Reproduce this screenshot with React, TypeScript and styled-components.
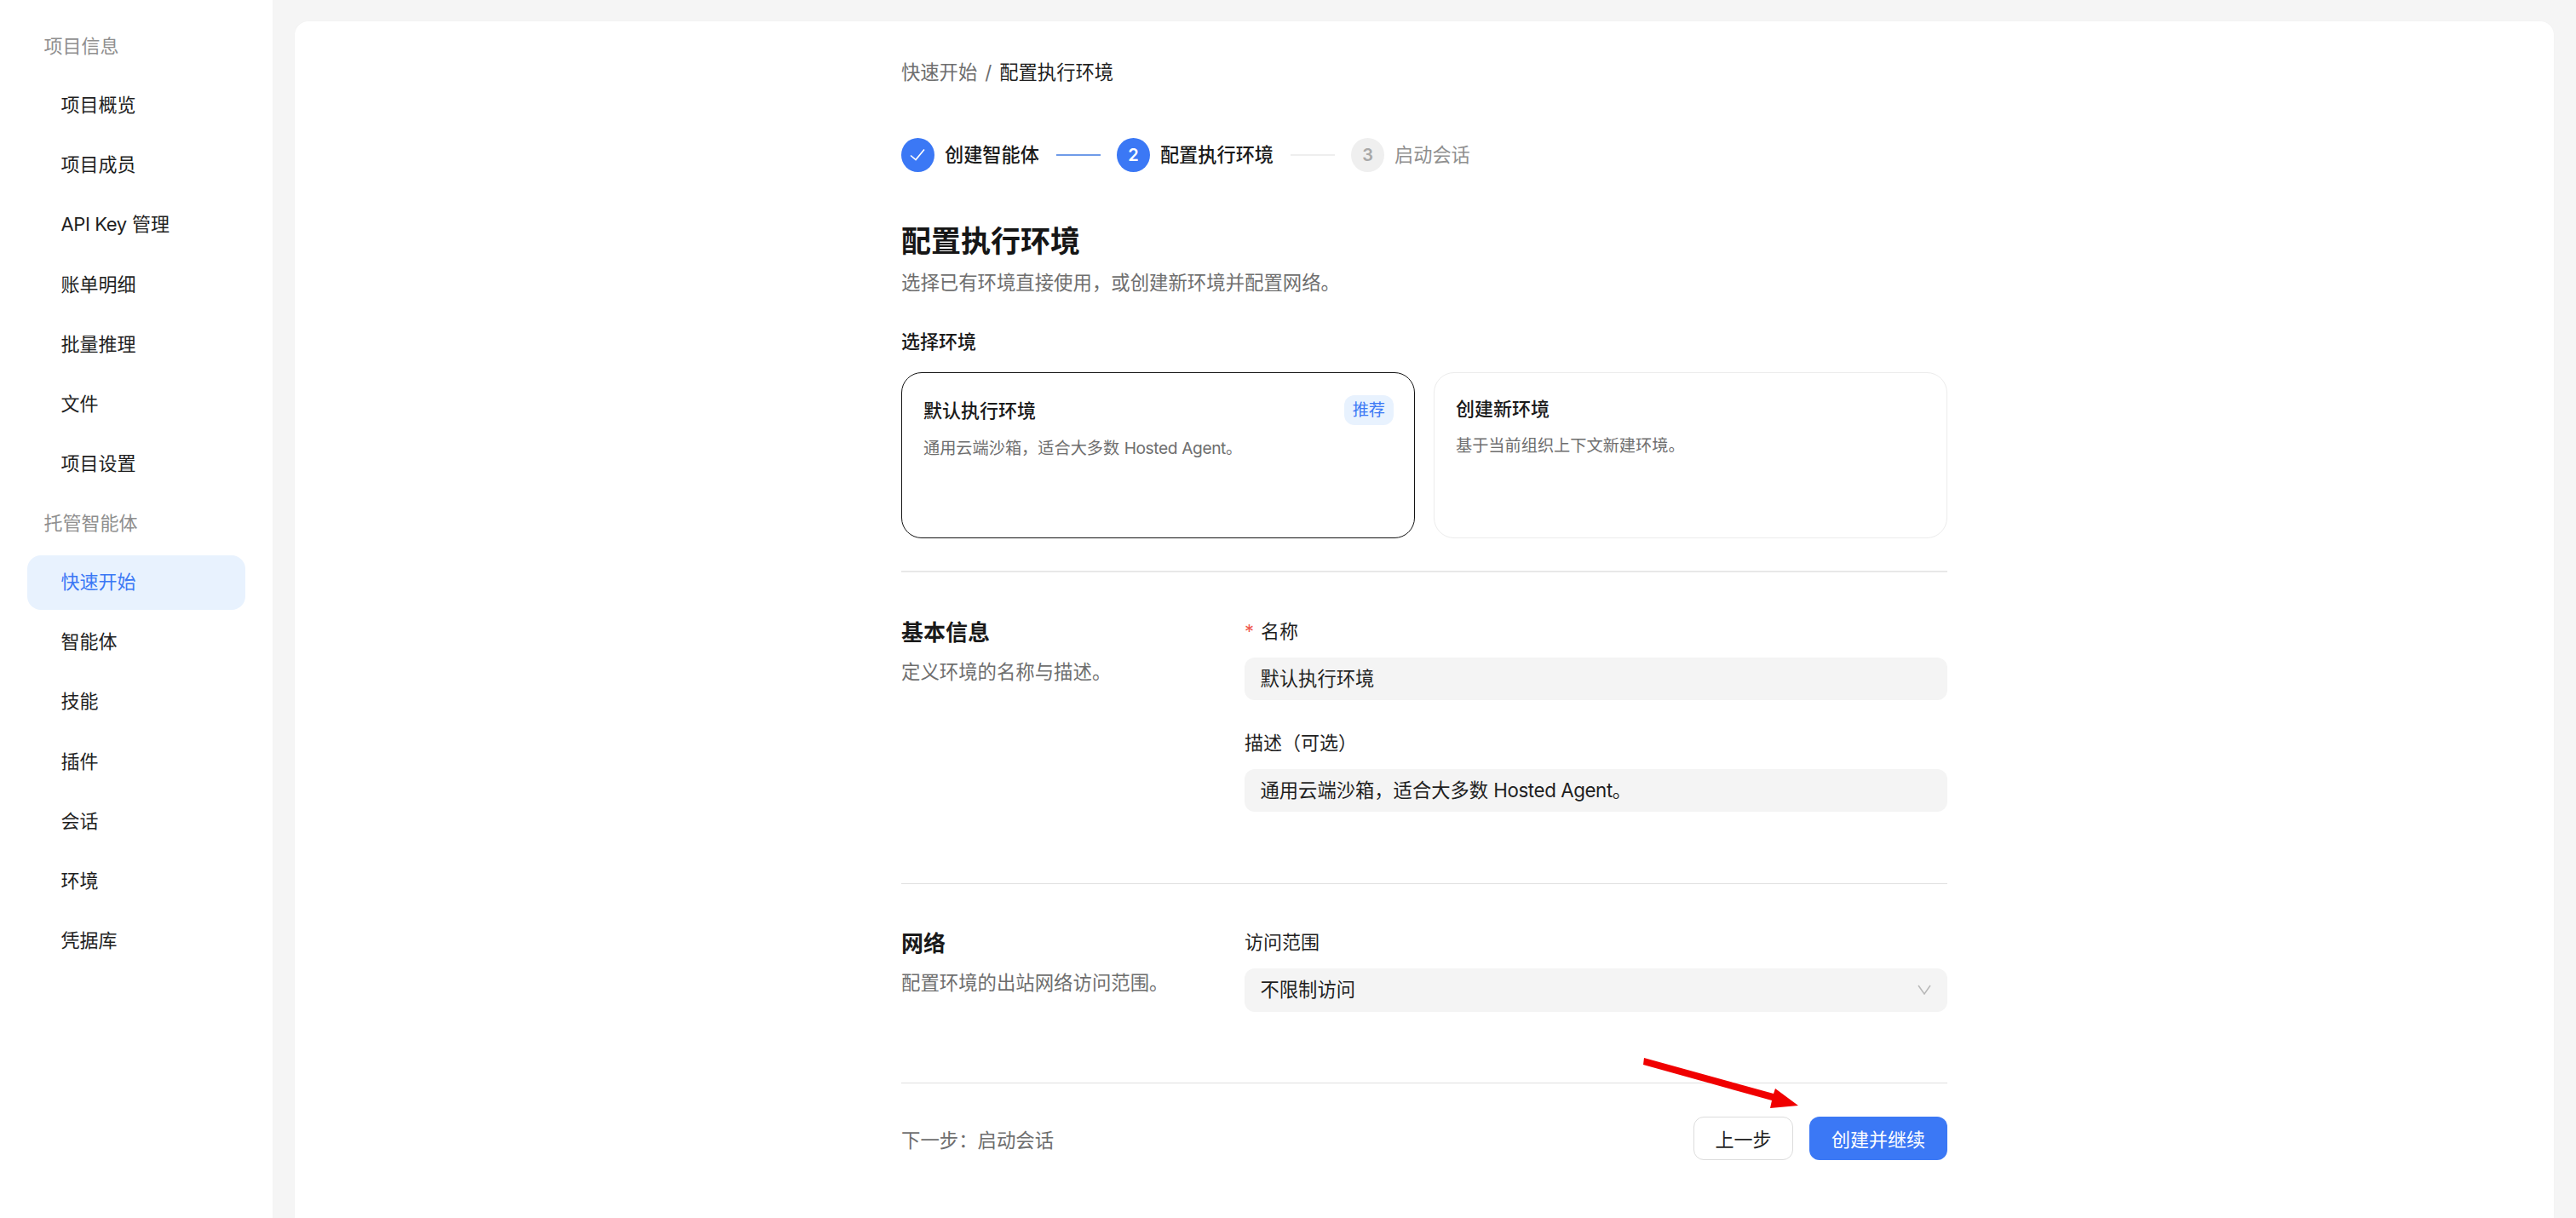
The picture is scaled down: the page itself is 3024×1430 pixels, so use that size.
import React from "react";
import styled, { createGlobalStyle } from "styled-components";

const GlobalStyle = createGlobalStyle`
  html, body {
    margin: 0;
    padding: 0;
    background: #f5f5f5;
    overflow: hidden;
  }
  * {
    box-sizing: border-box;
  }
  body {
    font-family: Inter, "Noto Sans CJK SC", sans-serif;
    color: #1a1a1a;
  }
`;

const Layout = styled.div`
  position: relative;
  display: flex;
  width: 3024px;
  height: 1430px;
  overflow: hidden;
  background: #f5f5f5;
`;

const Sidebar = styled.nav`
  flex: 0 0 320px;
  display: flex;
  flex-direction: column;
  padding: 39px 32px 0;
  background: #fff;
`;

const NavSection = styled.div`
  display: flex;
  flex-direction: column;
  gap: 6.2px;
  margin-bottom: 22px;
`;

const NavLabel = styled.div`
  height: 32px;
  margin-bottom: 14.8px;
  padding-left: 19.5px;
  font-size: 22px;
  line-height: 31px;
  color: #8f8f8f;
`;

const NavItem = styled.div<{ $active?: boolean }>`
  height: 64px;
  padding-left: 39.5px;
  border-radius: 16px;
  font-size: 22px;
  line-height: 62px;
  color: ${p => (p.$active ? "#3b78f5" : "#1f1f1f")};
  background: ${p => (p.$active ? "#e8f2fe" : "transparent")};
`;

const Latin = styled.span`
  letter-spacing: -0.4px;
`;

const Panel = styled.main`
  flex: 1;
  display: flex;
  justify-content: center;
  margin: 25px 26px 0;
  border-radius: 16px 16px 0 0;
  background: #fff;
  box-shadow: 0 0 2px rgba(0, 0, 0, 0.03);
`;

const Content = styled.div`
  display: flex;
  flex-direction: column;
  width: 1228px;
  padding-top: 44px;
`;

const Breadcrumb = styled.div`
  display: flex;
  gap: 9px;
  font-size: 22.3px;
  line-height: 32px;
  color: #6e6e6e;

  b {
    font-weight: 400;
    color: #1f1f1f;
  }
`;

const Stepper = styled.div`
  display: flex;
  align-items: center;
  margin-top: 61px;
`;

const StepDot = styled.span<{ $state: "done" | "current" | "todo" }>`
  display: flex;
  align-items: center;
  justify-content: center;
  flex: 0 0 39px;
  height: 40px;
  border-radius: 50%;
  font-size: 20px;
  font-weight: 600;
  color: ${p => (p.$state === "todo" ? "#a8a8a8" : "#fff")};
  background: ${p => (p.$state === "todo" ? "#efefef" : "#3b78f5")};
`;

const StepLabel = styled.span<{ $muted?: boolean }>`
  margin-left: 12px;
  font-size: 22.2px;
  line-height: 32px;
  font-weight: ${p => (p.$muted ? 400 : 500)};
  color: ${p => (p.$muted ? "#8f8f8f" : "#1a1a1a")};
`;

const StepLine = styled.span<{ $done?: boolean }>`
  flex: 0 0 52px;
  height: 2px;
  margin: 0 19px 0 20px;
  background: ${p => (p.$done ? "#6f9be8" : "#eeeeee")};
`;

const Title = styled.h1`
  margin: 57px 0 0;
  font-size: 35px;
  line-height: 48px;
  font-weight: 700;
  color: #161616;
`;

const Subtitle = styled.p`
  margin: 9px 0 0;
  font-size: 22.4px;
  line-height: 32px;
  color: #6e6e6e;
`;

const ChooseLabel = styled.div`
  margin-top: 37px;
  font-size: 22px;
  line-height: 32px;
  font-weight: 500;
  color: #1a1a1a;
`;

const CardGrid = styled.div`
  display: grid;
  grid-template-columns: 1fr 1fr;
  gap: 22px;
  margin: 20px 0 38px;
`;

const Card = styled.div<{ $selected?: boolean }>`
  height: 195px;
  padding: 26px 24px 0 25px;
  border: 1px solid ${p => (p.$selected ? "#141414" : "#ececec")};
  border-radius: 24px;
  background: #fff;
`;

const CardHead = styled.div`
  display: flex;
  align-items: center;
  justify-content: space-between;
  margin-bottom: 12px;
`;

const CardTitle = styled.div`
  font-size: 22px;
  line-height: 32px;
  font-weight: 500;
  color: #1a1a1a;
`;

const CardText = styled.div`
  font-size: 19.2px;
  line-height: 30px;
  color: #6e6e6e;
`;

const Badge = styled.span`
  height: 35px;
  padding: 0 10px;
  border-radius: 12px;
  font-size: 19.2px;
  line-height: 34px;
  color: #3b78f5;
  background: #e8f2fe;
`;

const Section = styled.section<{ $first?: boolean }>`
  display: grid;
  grid-template-columns: 403px 825px;
  padding: ${p => (p.$first ? "54px 0 84px" : "53px 0 83px")};
  border-top: ${p => (p.$first ? "2px solid #e8e8e8" : "1px solid #e0e0e0")};
`;

const SectionIntro = styled.div`
  display: flex;
  flex-direction: column;
  gap: 12px;
`;

const SectionTitle = styled.h2`
  height: 36px;
  margin: 0;
  font-size: 26px;
  line-height: 34px;
  font-weight: 600;
  color: #1a1a1a;
`;

const SectionText = styled.p`
  height: 32px;
  margin: 0;
  font-size: 22.4px;
  line-height: 30px;
  color: #6e6e6e;
`;

const Fields = styled.div`
  display: flex;
  flex-direction: column;
  gap: 35px;
`;

const FieldGroup = styled.div`
  display: flex;
  flex-direction: column;
  gap: 14px;
`;

const FieldLabel = styled.label`
  height: 32px;
  font-size: 22px;
  line-height: 30px;
  color: #1f1f1f;

  i {
    margin-right: 8px;
    font-style: normal;
    color: #ef5a50;
  }
`;

const Field = styled.div<{ $select?: boolean }>`
  display: flex;
  align-items: center;
  justify-content: space-between;
  height: ${p => (p.$select ? "51px" : "50px")};
  padding: 0 19px 5px 18.5px;
  border-radius: 12px;
  font-size: 22.3px;
  color: #1f1f1f;
  background: #f4f4f4;

  svg {
    position: relative;
    top: 2px;
  }
`;

const Footer = styled.footer`
  display: flex;
  align-items: center;
  justify-content: space-between;
  padding-top: 39px;
  border-top: 1px solid #e0e0e0;
`;

const NextHint = styled.span`
  font-size: 22.4px;
  color: #6e6e6e;
`;

const Actions = styled.div`
  display: flex;
  gap: 19px;
`;

const Button = styled.button<{ $primary?: boolean }>`
  height: 51px;
  width: ${p => (p.$primary ? "162px" : "117px")};
  padding: 0 0 2px;
  border: ${p => (p.$primary ? "0" : "1px solid #dcdcdc")};
  border-radius: 12px;
  font-family: inherit;
  font-size: 22px;
  color: ${p => (p.$primary ? "#fff" : "#1f1f1f")};
  background: ${p => (p.$primary ? "#3b78f5" : "#fff")};
`;

const ArrowMark = styled.svg`
  position: absolute;
  left: 1920px;
  top: 1235px;
  width: 200px;
  height: 75px;
`;

const NAV: { label: string; items: React.ReactNode[] }[] = [
  {
    label: "项目信息",
    items: [
      "项目概览",
      "项目成员",
      <>
        <Latin>API Key</Latin> 管理
      </>,
      "账单明细",
      "批量推理",
      "文件",
      "项目设置"
    ]
  },
  {
    label: "托管智能体",
    items: ["快速开始", "智能体", "技能", "插件", "会话", "环境", "凭据库"]
  }
];

const App = () => {
  return (
    <Layout>
      <GlobalStyle />
      <Sidebar>
        {NAV.map(section => (
          <NavSection key={section.label}>
            <NavLabel>{section.label}</NavLabel>
            {section.items.map((item, i) => (
              <NavItem key={i} $active={item === "快速开始"}>
                {item}
              </NavItem>
            ))}
          </NavSection>
        ))}
      </Sidebar>
      <Panel>
        <Content>
          <Breadcrumb>
            <span>快速开始</span>
            <span>/</span>
            <b>配置执行环境</b>
          </Breadcrumb>

          <Stepper>
            <StepDot $state="done">
              <svg width="20" height="20" viewBox="0 0 20 20" fill="none">
                <path d="M1 10.5 L7 15.5 L17 3.5" stroke="#fff" strokeWidth="1.6" />
              </svg>
            </StepDot>
            <StepLabel>创建智能体</StepLabel>
            <StepLine $done />
            <StepDot $state="current">2</StepDot>
            <StepLabel>配置执行环境</StepLabel>
            <StepLine />
            <StepDot $state="todo">3</StepDot>
            <StepLabel $muted>启动会话</StepLabel>
          </Stepper>

          <Title>配置执行环境</Title>
          <Subtitle>选择已有环境直接使用，或创建新环境并配置网络。</Subtitle>

          <ChooseLabel>选择环境</ChooseLabel>
          <CardGrid>
            <Card $selected>
              <CardHead>
                <CardTitle>默认执行环境</CardTitle>
                <Badge>推荐</Badge>
              </CardHead>
              <CardText>
                通用云端沙箱，适合大多数 <Latin>Hosted Agent</Latin>。
              </CardText>
            </Card>
            <Card>
              <CardHead>
                <CardTitle>创建新环境</CardTitle>
              </CardHead>
              <CardText>基于当前组织上下文新建环境。</CardText>
            </Card>
          </CardGrid>

          <Section $first>
            <SectionIntro>
              <SectionTitle>基本信息</SectionTitle>
              <SectionText>定义环境的名称与描述。</SectionText>
            </SectionIntro>
            <Fields>
              <FieldGroup>
                <FieldLabel>
                  <i>*</i>名称
                </FieldLabel>
                <Field>默认执行环境</Field>
              </FieldGroup>
              <FieldGroup>
                <FieldLabel>描述（可选）</FieldLabel>
                <Field>
                  <span>
                    通用云端沙箱，适合大多数 <Latin>Hosted Agent</Latin>。
                  </span>
                </Field>
              </FieldGroup>
            </Fields>
          </Section>

          <Section>
            <SectionIntro>
              <SectionTitle>网络</SectionTitle>
              <SectionText>配置环境的出站网络访问范围。</SectionText>
            </SectionIntro>
            <FieldGroup>
              <FieldLabel>访问范围</FieldLabel>
              <Field $select>
                不限制访问
                <svg width="16" height="12" viewBox="0 0 16 12" fill="none">
                  <path d="M1 1 L8 11 L15 1" stroke="#b8b8b8" strokeWidth="1.5" />
                </svg>
              </Field>
            </FieldGroup>
          </Section>

          <Footer>
            <NextHint>下一步：启动会话</NextHint>
            <Actions>
              <Button type="button">上一步</Button>
              <Button type="button" $primary>
                创建并继续
              </Button>
            </Actions>
          </Footer>
        </Content>
      </Panel>
      <ArrowMark viewBox="1920 1235 200 75">
        <polygon
          points="1930,1242 1929,1250 2080,1292 2078,1301 2111,1298 2084,1278 2082,1284"
          fill="#f00000"
        />
      </ArrowMark>
    </Layout>
  );
};

export default App;
